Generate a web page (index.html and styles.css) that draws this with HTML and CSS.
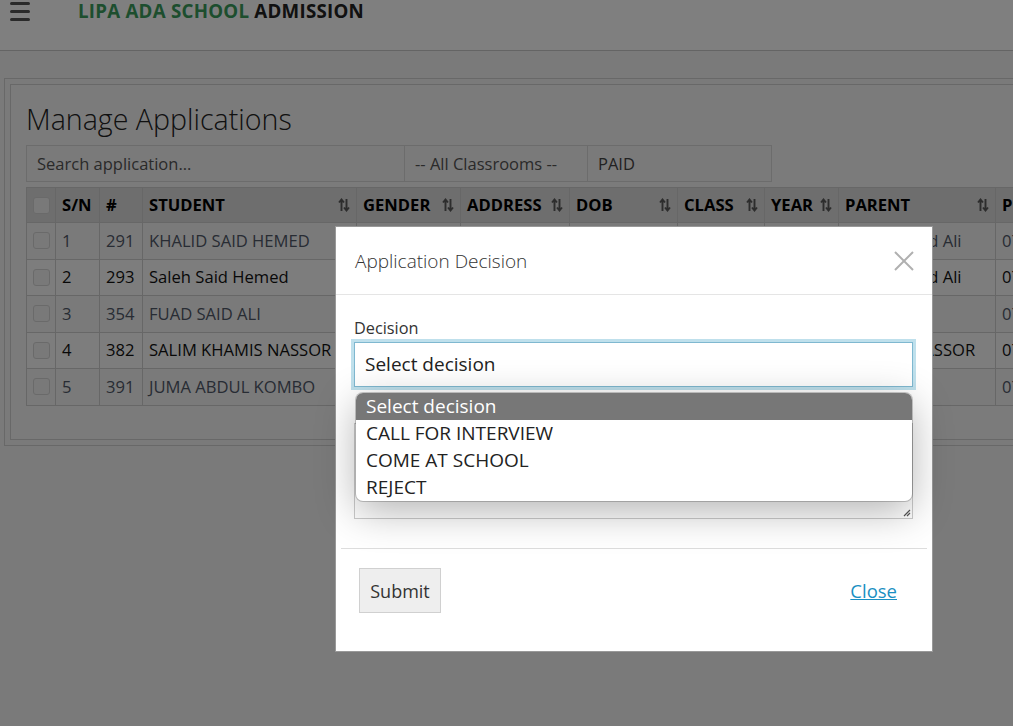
FILE: index.html
```html
<!DOCTYPE html>
<html>
<head>
<meta charset="utf-8">
<link rel="stylesheet" href="styles.css">
</head>
<body>
<header class="topbar">
  <div class="burger"><span></span><span></span><span></span></div>
  <div class="brand"><span class="green">LIPA ADA SCHOOL</span> ADMISSION</div>
</header>
<main class="main">
  <section class="panel">
    <div class="panel-inner">
      <h1 class="title">Manage Applications</h1>
      <div class="filters">
        <div class="f f-search">Search application...</div>
        <div class="f f-class">-- All Classrooms --</div>
        <div class="f f-paid">PAID</div>
      </div>
      <table class="grid">
        <colgroup>
          <col style="width:29px"><col style="width:44px"><col style="width:43px"><col style="width:214px"><col style="width:104px"><col style="width:109px"><col style="width:108px"><col style="width:87px"><col style="width:74px"><col style="width:157px"><col style="width:120px">
        </colgroup>
        <thead>
          <tr>
            <th><span class="cb"></span></th>
            <th>S/N</th>
            <th>#</th>
            <th><div class="th">STUDENT<svg class="sort" viewBox="0 0 12 14"><path d="M3.5 13V1.5M1 4.5L3.5 1.5L6 4.5M8.5 1V12.5M6 9.5L8.5 12.5L11 9.5"/></svg></div></th>
            <th><div class="th">GENDER<svg class="sort" viewBox="0 0 12 14"><path d="M3.5 13V1.5M1 4.5L3.5 1.5L6 4.5M8.5 1V12.5M6 9.5L8.5 12.5L11 9.5"/></svg></div></th>
            <th><div class="th">ADDRESS<svg class="sort" viewBox="0 0 12 14"><path d="M3.5 13V1.5M1 4.5L3.5 1.5L6 4.5M8.5 1V12.5M6 9.5L8.5 12.5L11 9.5"/></svg></div></th>
            <th><div class="th">DOB<svg class="sort" viewBox="0 0 12 14"><path d="M3.5 13V1.5M1 4.5L3.5 1.5L6 4.5M8.5 1V12.5M6 9.5L8.5 12.5L11 9.5"/></svg></div></th>
            <th><div class="th">CLASS<svg class="sort" viewBox="0 0 12 14"><path d="M3.5 13V1.5M1 4.5L3.5 1.5L6 4.5M8.5 1V12.5M6 9.5L8.5 12.5L11 9.5"/></svg></div></th>
            <th><div class="th">YEAR<svg class="sort" viewBox="0 0 12 14"><path d="M3.5 13V1.5M1 4.5L3.5 1.5L6 4.5M8.5 1V12.5M6 9.5L8.5 12.5L11 9.5"/></svg></div></th>
            <th><div class="th">PARENT<svg class="sort" viewBox="0 0 12 14"><path d="M3.5 13V1.5M1 4.5L3.5 1.5L6 4.5M8.5 1V12.5M6 9.5L8.5 12.5L11 9.5"/></svg></div></th>
            <th>PHONE</th>
          </tr>
        </thead>
        <tbody>
          <tr class="odd"><td><span class="cb"></span></td><td>1</td><td>291</td><td>KHALID SAID HEMED</td><td>Male</td><td>Mwanakwerekwe</td><td>2012-03-14</td><td>STD 5</td><td>2024</td><td>Hemed Said Ali</td><td>0777123456</td></tr>
          <tr class="even"><td><span class="cb"></span></td><td>2</td><td>293</td><td>Saleh Said Hemed</td><td>Male</td><td>Mwanakwerekwe</td><td>2013-06-02</td><td>STD 4</td><td>2024</td><td>Hemed Said Ali</td><td>0777123456</td></tr>
          <tr class="odd"><td><span class="cb"></span></td><td>3</td><td>354</td><td>FUAD SAID ALI</td><td>Male</td><td>Mombasa</td><td>2014-01-21</td><td>STD 3</td><td>2024</td><td>SAID ALI</td><td>0772987654</td></tr>
          <tr class="even"><td><span class="cb"></span></td><td>4</td><td>382</td><td>SALIM KHAMIS NASSOR</td><td>Male</td><td>Kiembe Samaki</td><td>2012-09-10</td><td>STD 5</td><td>2024</td><td>KHAMIS NASSOR</td><td>0776543210</td></tr>
          <tr class="odd"><td><span class="cb"></span></td><td>5</td><td>391</td><td>JUMA ABDUL KOMBO</td><td>Male</td><td>Fuoni</td><td>2015-11-30</td><td>STD 2</td><td>2024</td><td>ABDUL</td><td>0713456789</td></tr>
        </tbody>
      </table>
    </div>
  </section>
</main>

<div class="backdrop"></div>

<div class="modal">
  <div class="modal-head">
    <h2 class="modal-title">Application Decision</h2>
    <svg class="x" viewBox="0 0 20 20"><path d="M1 1L19 19M19 1L1 19"/></svg>
  </div>
  <div class="modal-body">
    <label class="lbl">Decision</label>
    <div class="select">Select decision</div>
    <div class="textarea"><svg class="grip" viewBox="0 0 8 8"><path d="M7 1L1 7M7 4L4 7"/></svg></div>
  </div>
  <div class="modal-foot">
    <button class="btn">Submit</button>
    <a class="close-link" href="#">Close</a>
  </div>
  <ul class="dropdown">
    <li class="sel">Select decision</li>
    <li>CALL FOR INTERVIEW</li>
    <li>COME AT SCHOOL</li>
    <li>REJECT</li>
  </ul>
</div>
</body>
</html>
```

FILE: styles.css
```css
* { box-sizing: border-box; }
html, body { margin: 0; padding: 0; }
body {
  width: 1013px;
  height: 726px;
  overflow: hidden;
  background: #f5f5f5;
  font-family: "Open Sans", "Liberation Sans", sans-serif;
  color: #333;
  position: relative;
}
.topbar {
  height: 51px;
  background: #fff;
  border-bottom: 1px solid #c8c8c8;
  display: flex;
  align-items: flex-start;
  padding: 0 0 0 10px;
}
.burger {
  width: 20px;
  display: flex;
  flex-direction: column;
  gap: 5px;
  margin-top: 2px;
}
.burger span {
  display: block;
  height: 3px;
  border-radius: 2px;
  background: #555;
}
.brand {
  margin-left: 48px;
  font-weight: 700;
  font-size: 18.7px;
  line-height: 22px;
  letter-spacing: 0.25px;
  color: #222;
}
.brand .green { color: #3a9d5d; }

.main { padding: 27px 0 0 4px; }
.panel {
  width: 1100px;
  border: 1px solid #d0d0d0;
  padding: 5px;
  background: #f5f5f5;
}
.panel-inner {
  border: 1px solid #d0d0d0;
  padding: 10px 0 33px 15px;
  background: #f7f7f7;
}
.title {
  margin: 0;
  font-weight: 300;
  font-size: 28.6px;
  line-height: 48px;
  color: #222;
}
.filters {
  display: flex;
  width: 746px;
  height: 37px;
  border: 1px solid #d8d8d8;
  background: #f4f4f4;
  margin-top: 2px;
}
.f {
  font-size: 16.5px;
  line-height: 35px;
  color: #555;
  padding-left: 10px;
}
.f-search { width: 378px; border-right: 1px solid #d8d8d8; }
.f-class { width: 183px; border-right: 1px solid #d8d8d8; }
.f-paid { flex: 1; color: #444; }

.grid {
  margin-top: 5px;
  border-collapse: collapse;
  table-layout: fixed;
  width: 1069px;
  font-size: 16.6px;
  line-height: 22px;
}
.grid th, .grid td {
  border: 1px solid #cfcfcf;
  padding: 0 6px;
  text-align: left;
  white-space: nowrap;
  overflow: hidden;
}
.grid th {
  height: 35px;
  background: #dcdcdc;
  font-weight: 700;
  color: #000;
}
.grid td { height: 36.5px; }
.grid tr.odd td { background: #f4f4f4; color: #505868; }
.grid tr.even td { background: #fbfbfb; color: #111; }
.th {
  display: flex;
  align-items: center;
  justify-content: space-between;
}
.sort {
  width: 12px;
  height: 14px;
  fill: none;
  stroke: #5a5a5a;
  stroke-width: 1.9;
  flex: none;
}
.cb {
  display: block;
  width: 17px;
  height: 17px;
  border: 1px solid #d5d5d5;
  border-radius: 3px;
  background: #f2f2f2;
}

.backdrop {
  position: absolute;
  inset: 0;
  background: rgba(0, 0, 0, 0.5);
}

.modal {
  position: absolute;
  left: 335px;
  top: 226px;
  width: 598px;
  height: 426px;
  background: #fff;
  border: 1px solid #999;
  display: flex;
  flex-direction: column;
}
.modal-head {
  height: 68px;
  border-bottom: 1px solid #e5e5e5;
  display: flex;
  align-items: center;
  justify-content: space-between;
  padding: 0 18px 0 19px;
}
.modal-title {
  margin: 0;
  font-weight: 300;
  font-size: 19px;
  color: #333;
}
.x {
  width: 20px;
  height: 20px;
  stroke: #b0b0b0;
  stroke-width: 2;
  fill: none;
}
.modal-body {
  padding: 22px 19px 0 18px;
  height: 253px;
}
.lbl {
  display: block;
  font-size: 16.3px;
  line-height: 22px;
  color: #333;
}
.select {
  margin-top: 3px;
  height: 45px;
  border: 1px solid #7fb8d0;
  box-shadow: 0 0 0 3px #bfe0ec;
  font-size: 19px;
  line-height: 43px;
  padding-left: 10px;
  color: #222;
  background: #fff;
}
.textarea {
  position: relative;
  height: 96px;
  border: 1px solid #ccc;
  margin-top: 36px;
}
.grip {
  position: absolute;
  right: 1px;
  bottom: 1px;
  width: 8px;
  height: 8px;
  stroke: #555;
  stroke-width: 1.2;
  fill: none;
}
.modal-foot {
  margin: 0 5px;
  border-top: 1px solid #ddd;
  display: flex;
  align-items: center;
  justify-content: space-between;
  padding: 19px 30px 0 18px;
}
.btn {
  width: 82px;
  height: 45px;
  font-family: "Open Sans", "Liberation Sans", sans-serif;
  font-size: 18px;
  color: #333;
  background: #eee;
  border: 1px solid #d0d0d0;
  padding: 0;
}
.close-link {
  font-size: 18.5px;
  color: #1a8fc2;
  text-decoration: underline;
}
.dropdown {
  position: absolute;
  left: 20px;
  top: 166px;
  width: 556px;
  margin: 0;
  padding: 0;
  list-style: none;
  background: #fff;
  border-radius: 7px;
  overflow: hidden;
  box-shadow: 0 0 0 1px rgba(0,0,0,0.2), 0 10px 40px rgba(0,0,0,0.3);
}
.dropdown li {
  height: 27px;
  line-height: 27px;
  font-size: 19px;
  padding-left: 10px;
  color: #222;
}
.dropdown li.sel {
  background: #777;
  color: #fff;
}
```
